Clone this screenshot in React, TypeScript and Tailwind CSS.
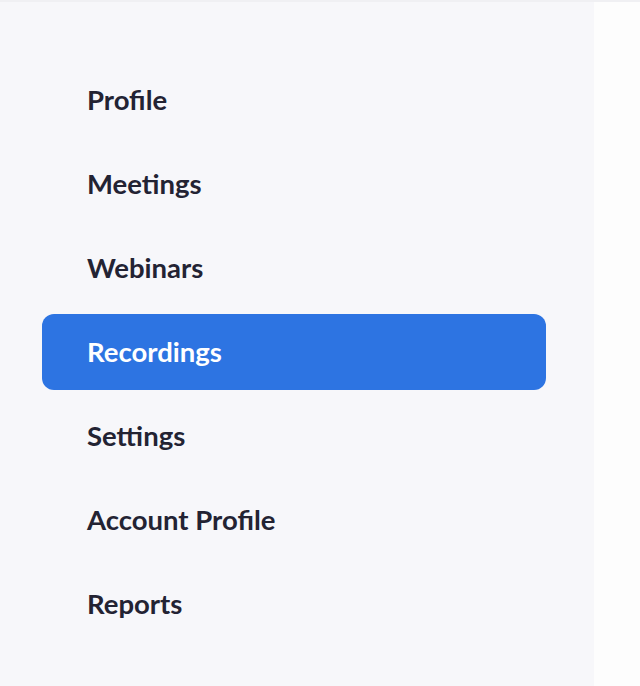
const items = ['Profile', 'Meetings', 'Webinars', 'Recordings', 'Settings', 'Account Profile', 'Reports'];

export default function App() {
  const active = 'Recordings';
  return (
    <div className="flex h-[686px] w-[640px] border-t-2 border-[#f0f0f3] bg-[#fdfdfd] font-['Lato',sans-serif]">
      <nav className="flex w-[594px] flex-col gap-2 bg-[#f7f7fa] pl-[42px] pr-12 pt-[60px]">
        {items.map((item) => (
          <a
            key={item}
            className={
              item === active
                ? 'flex h-[76px] items-center rounded-xl bg-[#2d74e2] pl-[45px] text-[27.5px] font-bold text-white'
                : 'flex h-[76px] items-center rounded-xl pl-[45px] text-[27.5px] font-bold text-[#232333]'
            }
          >
            {item}
          </a>
        ))}
      </nav>
      <div className="flex-1" />
    </div>
  );
}
